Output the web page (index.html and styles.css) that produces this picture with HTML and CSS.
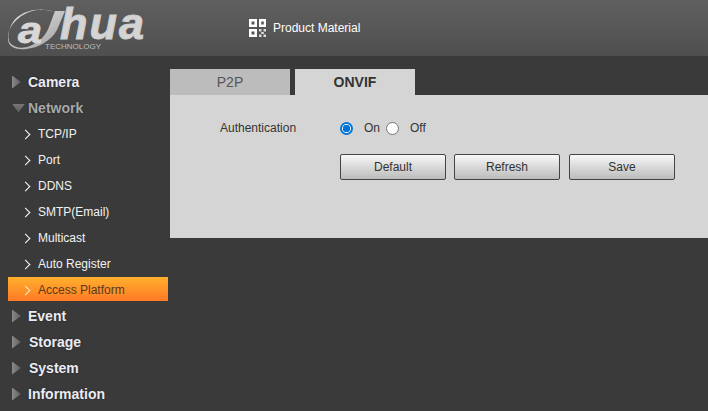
FILE: index.html
```html
<!DOCTYPE html>
<html lang="en">
<head>
<meta charset="utf-8">
<title>Access Platform</title>
<link rel="stylesheet" href="styles.css">
</head>
<body>
<header class="top">
  <div class="logo">
    <svg class="swoosh" width="70" height="50" viewBox="0 0 70 50">
      <defs>
        <linearGradient id="lg" x1="0" y1="0" x2="1" y2="1">
          <stop offset="0" stop-color="#f0f0f0"/>
          <stop offset="1" stop-color="#9a9a9a"/>
        </linearGradient>
      </defs>
      <path d="M54 12 C40 6 20 11 13 22 C8 30 7 38 10 43 C14 48 23 49 30 46 C40 42 46 35 49 27 L55 11 L65 11 L57 30 C51 41 38 48 26 49 C15 50 7 47 8 36 C9 21 32 3 54 12 Z" fill="url(#lg)"/>
    </svg>
    <span class="brand-a">a</span><span class="brand">hua</span>
    <span class="tech">TECHNOLOGY</span>
  </div>
  <div class="material">
    <svg class="qr" width="17" height="18" viewBox="0 0 17 18">
      <path fill="#fff" fill-rule="evenodd" d="M0 0h8v8H0zM2.500 2.500v3h3v-3zM10 0h7v8h-7zM12.200 2.500v3h2.600v-3zM0 10h8v8H0zM2.500 12.500v3h3v-3z"/>
      <path fill="#ddd" d="M10 10h2.500v2.500h-2.500zM14.500 10h2.500v2.500h-2.500zM12.200 13h2.600v2h-2.600zM10 15.500h2.500v2.500h-2.500zM14.500 15.500h2.500v2.500h-2.500z"/>
    </svg>
    <span>Product Material</span>
  </div>
</header>
<div class="main">
  <nav class="side">
    <div class="head"><i class="tri"></i>Camera</div>
    <div class="head open"><i class="tri-down"></i>Network</div>
    <div class="sub"><i class="chev"></i>TCP/IP</div>
    <div class="sub"><i class="chev"></i>Port</div>
    <div class="sub"><i class="chev"></i>DDNS</div>
    <div class="sub"><i class="chev"></i>SMTP(Email)</div>
    <div class="sub"><i class="chev"></i>Multicast</div>
    <div class="sub"><i class="chev"></i>Auto Register</div>
    <div class="sub active"><i class="chev"></i>Access Platform</div>
    <div class="head"><i class="tri"></i>Event</div>
    <div class="head shifted"><i class="tri"></i>Storage</div>
    <div class="head shifted"><i class="tri"></i>System</div>
    <div class="head"><i class="tri"></i>Information</div>
  </nav>
  <section class="content">
    <div class="tabs">
      <div class="tab">P2P</div>
      <div class="tab current">ONVIF</div>
    </div>
    <div class="panel">
      <div class="row">
        <span class="label">Authentication</span>
        <span class="radio on"></span><span class="opt">On</span>
        <span class="radio"></span><span class="opt off">Off</span>
      </div>
      <div class="buttons">
        <button class="btn">Default</button>
        <button class="btn">Refresh</button>
        <button class="btn last">Save</button>
      </div>
    </div>
  </section>
</div>
</body>
</html>
```
FILE: styles.css
```css
* { box-sizing: border-box; }
html, body { margin: 0; height: 100%; }
body {
  width: 708px;
  height: 411px;
  overflow: hidden;
  background: #3a3a3a;
  font-family: "Liberation Sans", Arial, sans-serif;
  font-size: 12px;
  color: #333;
}
.top {
  height: 56px;
  background: linear-gradient(#5f5f5f, #4f4f4f);
  display: flex;
  align-items: center;
}
.logo {
  width: 249px;
  height: 56px;
  position: relative;
  flex: none;
}
.swoosh { position: absolute; left: 0; top: 0; }
.brand-a {
  position: absolute;
  left: 18px;
  top: 20px;
  transform: scaleX(1.2);
  transform-origin: left center;
  font: italic bold 36px/22px "Liberation Sans", sans-serif;
  -webkit-text-stroke: .8px #d8d8d8;
  color: #d8d8d8;
}
.brand {
  position: absolute;
  left: 60px;
  top: 5px;
  padding-right: 4px;
  font: italic bold 45px/38px "Liberation Sans", sans-serif;
  letter-spacing: 2px;
  -webkit-text-stroke: 1px #cfcfcf;
  color: #d4d4d4;
}
.tech {
  position: absolute;
  left: 45px;
  top: 43px;
  font-size: 8px;
  line-height: 8px;
  color: #bdbdbd;
}
.material {
  display: flex;
  align-items: center;
  gap: 7px;
  color: #fff;
  font-size: 12px;
}
.main { display: flex; }
.side {
  width: 170px;
  flex: none;
  padding: 13px 2px 0 8px;
}
.head {
  height: 26px;
  display: flex;
  align-items: center;
  padding-left: 4px;
  gap: 7px;
  font-size: 14px;
  font-weight: bold;
  color: #ebebf5;
  text-shadow: 0 0 2px #222;
}
.head.shifted { gap: 8px; }
.head.open { color: #a8a8a8; }
.tri {
  width: 9px;
  height: 13px;
  clip-path: polygon(0 0, 100% 50%, 0 100%);
  background: linear-gradient(90deg, #8a8a8a, #5c5c5c);
}
.tri-down {
  width: 13px;
  height: 9px;
  margin-right: -4px;
  clip-path: polygon(0 0, 100% 0, 50% 100%);
  background: linear-gradient(#777, #5c5c5c);
}
.sub {
  height: 26px;
  display: flex;
  align-items: center;
  padding-left: 14px;
  gap: 9px;
  color: #f2f2f2;
  font-size: 12px;
}
.chev {
  width: 7px;
  height: 7px;
  transform: rotate(45deg);
  border-top: 1.500px solid #fff;
  border-right: 1.500px solid #fff;
  flex: none;
}
.sub.active {
  height: 24px;
  margin-bottom: 2px;
  padding-top: 2px;
  background: linear-gradient(#ffb02e, #ff7a26);
  color: #5a3a1a;
}
.sub.active .chev { border-color: #ffeccc; }
.content { width: 538px; flex: none; padding-top: 13px; }
.tabs { display: flex; gap: 5px; height: 26px; }
.tab {
  width: 120px;
  background: #bcbcbc;
  color: #555;
  font-size: 14px;
  display: flex;
  align-items: center;
  justify-content: center;
}
.tab.current { background: #d5d5d5; color: #333; font-weight: bold; }
.panel {
  height: 143px;
  background: #d5d5d5;
  padding: 26px 0 0 50px;
}
.row { display: flex; align-items: center; height: 14px; }
.label { width: 120px; }
.radio {
  width: 13px;
  height: 13px;
  border-radius: 50%;
  border: 1px solid #767676;
  background: #fff;
  flex: none;
}
.radio.on {
  border: 2px solid #0075d9;
  background: radial-gradient(circle, #0075d9 0 3.500px, #fff 4px);
}
.opt { margin-left: 11px; width: 22px; }
.buttons { display: flex; gap: 8px; margin: 19px 0 0 120px; }
.btn {
  width: 106px;
  height: 26px;
  padding: 0;
  border: 1px solid #444;
  border-radius: 2px;
  background: linear-gradient(#f7f7f7, #bcbcbc);
  color: #333;
  font: 12px "Liberation Sans", sans-serif;
}
.btn.last { margin-left: 1px; }
```
